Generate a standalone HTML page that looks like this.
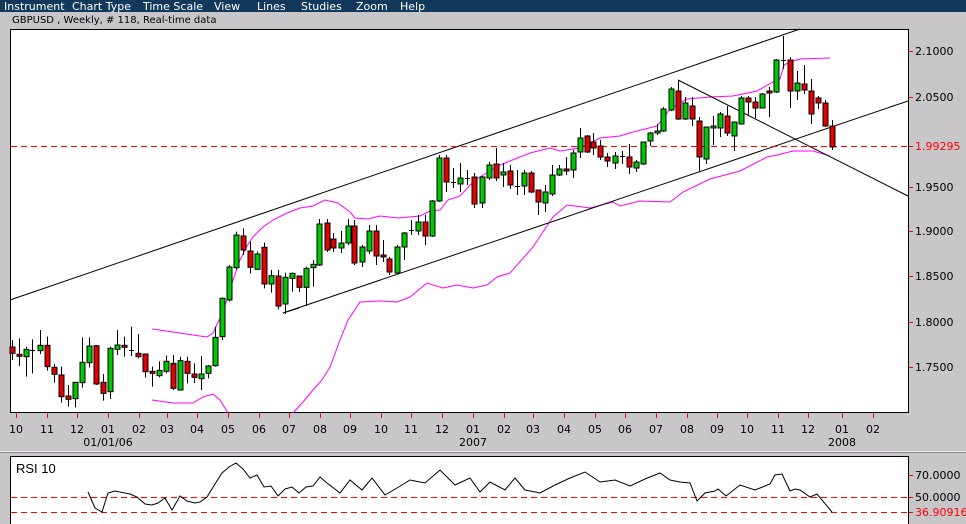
<!DOCTYPE html>
<html><head><meta charset="utf-8"><style>
html,body{margin:0;padding:0;width:966px;height:524px;overflow:hidden;background:#c8c6c8;}
svg{display:block}
text{font-family:"DejaVu Sans","Liberation Sans",sans-serif;}
</style></head><body>
<svg id="s" width="966" height="524" xmlns="http://www.w3.org/2000/svg">
<rect x="0" y="0" width="966" height="12" fill="#12395c"/>
<g font-family="Liberation Sans, sans-serif" font-size="11" fill="#fff" style="font-family:'Liberation Sans',sans-serif">
<text x="4" y="10">Instrument</text><text x="72" y="10">Chart Type</text><text x="143" y="10">Time Scale</text><text x="214" y="10">View</text><text x="257" y="10">Lines</text><text x="301" y="10">Studies</text><text x="356" y="10">Zoom</text><text x="400" y="10">Help</text>
</g>
<text x="12" y="23" font-size="10" fill="#000">GBPUSD , Weekly, # 118, Real-time data</text>
<rect x="10.5" y="29.5" width="898" height="383" fill="#fff" stroke="#000"/>
<g id="g"></g>
</svg>
<script>
var g=document.getElementById('g'),h='';
function L(x1,y1,x2,y2,c,w,d){h+='<line x1="'+x1+'" y1="'+y1+'" x2="'+x2+'" y2="'+y2+'" stroke="'+c+'" stroke-width="'+(w||1)+'"'+(d?' stroke-dasharray="'+d+'"':'')+'/>';}
function P(pts,c){h+='<polyline fill="none" stroke="'+c+'" stroke-width="1" points="'+pts+'"/>';}
// zoom3 candles: [x, c, top, bot, wt, wb] raw Y (y=200+Y/3)
var z3=[[12,'r',441,460,420,480],[19,'r',463,469,415,498],[26,'g',448,470,440,530],[32,'d',450,452,418,520],[40,'g',436,452,390,462],[47,'r',436,500,410,512],[54,'r',502,523,492,548],[61,'r',525,590,500,608],[68,'r',588,598,555,620],[75,'g',547,596,547,622],[82,'g',487,548,413,563],[89,'g',438,488,413,503],[96,'r',437,552,435,555],[103,'r',547,580,522,602],[110,'g',445,575,440,597],[117,'g',435,448,390,465],[124,'r',436,442,410,470],[131,'d',450,452,380,468],[138,'r',460,470,402,475],[145,'r',462,515,462,533],[152,'r',514,520,500,560],[159,'g',511,527,484,532],[166,'g',484,514,467,520],[173,'r',490,565,465,570],[180,'g',482,570,470,572],[187,'r',484,520,470,550],[194,'r',522,532,490,549],[201,'g',522,536,468,570],[208,'g',498,520,495,535],[215,'g',412,497,380,500],[222,'g',295,410,292,420],[229,'g',201,300,195,305],[236,'g',105,203,95,210],[243,'r',108,150,85,165],[250,'r',153,202,125,220],[257,'g',162,208,155,210],[264,'r',142,252,128,265],[271,'g',227,252,210,278],[278,'r',228,318,210,328],[285,'g',232,312,218,342],[292,'g',220,235,218,275],[299,'r',228,262,228,276],[306,'g',205,262,200,318],[313,'g',193,203,180,260]];
var cs=[];
z3.forEach(function(a){cs.push([a[0],a[1],200+a[2]/3,200+a[3]/3,200+a[4]/3,200+a[5]/3]);});
var z5=[[319,'g',224,265,219,266],[327,'r',223,250,219,252],[333,'r',239,248,233,252],[341,'g',243,248,231,253],[348,'g',226,243,219,245],[354,'r',226,263,220,265],[362,'g',247,262,245,267],[369,'g',231,251,225,254],[376,'r',231,256,225,265],[383,'r',255,257,240,262],[389,'r',259,272,257,275],[397,'g',247,273,245,274],[404,'g',233,247,232,260],[411,'d',230,231,220,235],[418,'g',222,231,215,235],[425,'r',222,236,215,245],[432,'g',201,236,200,237],[439,'g',158,201,155,202],[446,'r',158,182,155,192],[453,'d',182,183,168,188],[460,'g',178,184,163,192],[467,'d',178,179,170,185],[474,'r',177,204,173,208],[482,'g',177,203,176,208],[489,'g',165,178,162,180],[496,'r',164,178,148,181],[503,'g',172,175,163,187],[510,'r',171,185,165,189],[517,'d',186,187,170,195],[524,'g',173,186,170,195],[531,'r',173,192,171,193],[538,'r',190,202,190,215],[545,'g',192,203,185,212],[552,'g',175,194,165,196],[559,'g',169,175,165,176],[566,'r',169,171,157,175],[573,'g',153,170,150,178],[580,'g',138,152,128,158],[587,'r',136,152,135,153],[593,'r',142,148,133,155],
[600,'r',146,157,140,160],[607,'r',157,161,153,167],[615,'g',156,163,152,169],[622,'d',156,157,151,164],[629,'r',157,167,144,174],[636,'g',162,168,160,172],[643,'g',142,164,142,165],[650,'g',133,141,132,146],[657,'g',131,133,124,135],[663,'g',109,131,107,132],[671,'g',89,110,87,111],[678,'r',91,119,81,120],[685,'g',103,119,97,120],[692,'r',106,119,97,126],[699,'r',121,157,117,171],[706,'g',127,159,127,164],[713,'g',126,128,116,145],[720,'g',114,128,112,137],[727,'r',116,133,106,136],[734,'g',122,136,122,151],[741,'g',98,124,96,124],[748,'r',98,102,96,115],[755,'r',102,108,97,118],[762,'g',94,108,93,108],[769,'r',91,93,87,117],[776,'g',60,92,59,93],[783,'d',60,61,36,69],[790,'r',60,91,57,108],[797,'g',83,91,71,100],[804,'r',84,90,65,94],[811,'r',91,114,79,124],[818,'r',98,103,96,109],[825,'r',103,126,100,127],[832,'r',126,147,120,150]];
cs=cs.concat(z5);
// bands & lines first
P('152,329 173,332 193,335 207,337 213,333 220,318 227,300 233,280 240,260 247,246 253,237 263,227 273,220 287,213 300,208 313,206 325,200 338,203 350,212 355,218 368,219 380,216 398,218 420,216 430,211 440,210 448,200 460,196 475,180 500,165 530,153 550,148 560,151 580,148 590,143 600,138 620,136 633,132 657,126 670,109 687,99 710,97 733,96 757,91 773,82 780,79 784,65 790,62 800,59 830,58','#ff00ff');
P('152,400 173,403 193,403 203,397 213,394 220,400 228,413','#ff00ff');
P('293,413 303,402 313,390 322,380 330,367 340,340 348,320 360,302 380,301 397,302 410,297 427,283 443,288 457,285 473,288 487,285 497,277 510,273 533,247 553,217 567,205 590,208 613,202 620,206 640,201 670,202 683,192 710,179 740,171 767,157 777,155 793,151 813,151 830,156','#ff00ff');
L(10,300,800,29,'#000');
L(283,313,908,101,'#000');
L(678,80,908,196,'#000');
L(283,313,299,308,'#000');
L(11,146.5,908,146.5,'#ff0000',1,'6,4');
cs.forEach(function(c){var x=c[0];
 L(x+0.5,c[4],x+0.5,c[5],'#000');
 if(c[1]=='d'){L(x-2,c[2]+0.5,x+3,c[2]+0.5,'#000');}
 else{var t=Math.min(c[2],c[3]),b=Math.max(c[2],c[3]);if(b-t<2)b=t+2;
 h+='<rect x="'+(x-2)+'" y="'+t+'" width="5" height="'+(b-t)+'" fill="'+(c[1]=='g'?'#00c800':'#e00000')+'" stroke="#000" stroke-width="1"/>';}
});
// price axis
[[51,'2.1000'],[97,'2.0500'],[187,'1.9500'],[231,'1.9000'],[276,'1.8500'],[322,'1.8000'],[367,'1.7500']].forEach(function(a){L(909,a[0]+.5,913,a[0]+.5,'#ff0000');h+='<text x="915" y="'+(a[0]+4)+'" font-size="11" fill="#000">'+a[1]+'</text>';});
L(909,146.5,913,146.5,'#ff0000');h+='<text x="915" y="150" font-size="11" fill="#ff0000">1.99295</text>';
// month axis
var m=[[16,'10'],[47,'11'],[77,'12'],[108,'01'],[139,'02'],[167,'03'],[197,'04'],[228,'05'],[259,'06'],[289,'07'],[320,'08'],[350,'09'],[381,'10'],[411,'11'],[442,'12'],[473,'01'],[504,'02'],[533,'03'],[564,'04'],[595,'05'],[625,'06'],[656,'07'],[687,'08'],[717,'09'],[747,'10'],[778,'11'],[808,'12'],[842,'01'],[873,'02']];
m.forEach(function(a){L(a[0]+.5,413,a[0]+.5,418,'#ff0000');h+='<text x="'+a[0]+'" y="433" font-size="11" text-anchor="middle" fill="#000">'+a[1]+'</text>';});
h+='<text x="108" y="446" font-size="11" text-anchor="middle" fill="#000">01/01/06</text><text x="473" y="446" font-size="11" text-anchor="middle" fill="#000">2007</text><text x="842" y="446" font-size="11" text-anchor="middle" fill="#000">2008</text>';
L(0,451.5,966,451.5,'#f0f0f0');L(0,452.5,966,452.5,'#888');
// RSI
h+='<rect x="10.5" y="456.5" width="898" height="70" fill="#fff" stroke="#000"/>';
h+='<text x="16" y="473" font-size="13" fill="#000" style="font-family:Liberation Sans,sans-serif">RSI 10</text>';
L(11,497.5,908,497.5,'#ff0000',1,'6,4');L(11,512.5,908,512.5,'#ff0000',1,'6,4');
P('88,492 95,508 102,512 108,493 115,491 130,494 137,497 145,504 152,505 158,503 165,498 172,510 180,496 187,501 195,503 200,502 207,497 215,484 222,473 229,467 236,463 243,469 250,478 257,475 264,487 271,486 278,496 285,489 292,487 299,493 306,487 313,486 320,477 327,483 340,493 350,480 362,490 372,478 385,495 397,488 410,480 425,483 440,470 455,485 470,478 480,492 490,482 505,490 515,478 525,490 540,493 555,485 570,478 585,472 600,482 615,480 630,486 645,479 660,473 670,480 680,482 690,483 697,501 705,493 715,491 718,489 726,496 740,485 755,490 770,484 775,475 782,474 790,491 795,489 800,490 810,497 817,494 832,512','#000');
[[475,'70.0000','#000'],[497,'50.0000','#000'],[512,'36.90916','#ff0000']].forEach(function(a){L(909,a[0]+.5,913,a[0]+.5,'#ff0000');h+='<text x="915" y="'+(a[0]+4)+'" font-size="11" fill="'+a[2]+'">'+a[1]+'</text>';});
g.innerHTML=h;
</script>
</body></html>
